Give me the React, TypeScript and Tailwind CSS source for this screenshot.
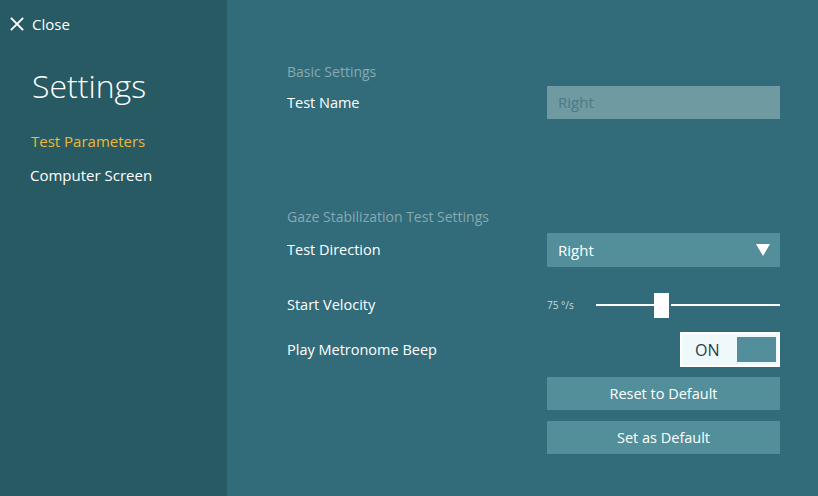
import React from "react";

export default function App() {
  const font = { fontFamily: '"Open Sans", "Noto Sans", sans-serif' };
  return (
    <div className="flex w-[818px] h-[496px] overflow-hidden" style={font}>
      <aside className="w-[227px] h-full bg-[#285a64] flex flex-col">
        <div className="flex items-center h-[20px] mt-[14px] pl-[10px] text-white">
          <svg width="14" height="14" viewBox="0 0 14 14" className="shrink-0">
            <path d="M1.5 1.5 L12.5 12.5 M12.5 1.5 L1.5 12.5" stroke="#ffffff" strokeWidth="1.8" strokeLinecap="square" />
          </svg>
          <span className="ml-[8px] text-[15px] leading-[20px]">Close</span>
        </div>
        <div className="mt-[31px] pl-[32px] text-white text-[32px] leading-[42px] font-light">Settings</div>
        <div className="mt-[24px] pl-[31px] text-[15px] leading-[20px] text-[#eab935]">Test Parameters</div>
        <div className="mt-[14px] pl-[30px] text-[15px] leading-[20px] text-white">Computer Screen</div>
      </aside>
      <main className="flex-1 h-full bg-[#326c7a] pl-[60px] pr-[38px] pt-[62px] text-white">
        <div className="h-[20px] text-[14px] leading-[20px] text-[#86a9b2]">Basic Settings</div>
        <div className="mt-[4px] flex items-center h-[33px]">
          <div className="flex-1 text-[14.5px]">Test Name</div>
          <div className="w-[233px] h-full bg-[#6f9aa2] flex items-center pl-[11px] text-[15px] text-[#4a7b87]">Right</div>
        </div>
        <div className="mt-[88px] h-[20px] text-[14px] leading-[20px] text-[#86a9b2]">Gaze Stabilization Test Settings</div>
        <div className="mt-[6px] flex items-center h-[34px]">
          <div className="flex-1 text-[14.5px]">Test Direction</div>
          <div className="w-[233px] h-full bg-[#528f9b] flex items-center justify-between pl-[11px] pr-[10px] text-[15px]">
            <span>Right</span>
            <svg width="14" height="12" viewBox="0 0 14 12">
              <path d="M0 0 H14 L7 12 Z" fill="#ffffff" />
            </svg>
          </div>
        </div>
        <div className="mt-[21px] flex items-center h-[34px]">
          <div className="flex-1 text-[14.5px]">Start Velocity</div>
          <div className="w-[233px] h-full flex items-center">
            <span className="w-[49px] text-[10px] text-[#c6dbe0]">75 °/s</span>
            <div className="flex-1 flex items-center h-full">
              <div className="w-[58px] h-[2px] bg-white" />
              <div className="w-[15px] h-[25px] bg-white" />
              <div className="flex-1 h-[2px] bg-white ml-[2px]" />
            </div>
          </div>
        </div>
        <div className="mt-[10px] flex items-center h-[35px]">
          <div className="flex-1 text-[14.5px]">Play Metronome Beep</div>
          <div className="w-[100px] h-full bg-[#eff8fa] border-[2px] border-white flex items-center pl-[13px] pr-[2px]">
            <span className="flex-1 text-[16px] text-[#1f3f47]">ON</span>
            <div className="w-[39px] h-[25px] bg-[#528f9b]" />
          </div>
        </div>
        <div className="mt-[10px] flex justify-end">
          <button className="w-[233px] h-[33px] bg-[#528f9b] text-[14.5px] text-white">Reset to Default</button>
        </div>
        <div className="mt-[11px] flex justify-end">
          <button className="w-[233px] h-[33px] bg-[#528f9b] text-[14.5px] text-white">Set as Default</button>
        </div>
      </main>
    </div>
  );
}
